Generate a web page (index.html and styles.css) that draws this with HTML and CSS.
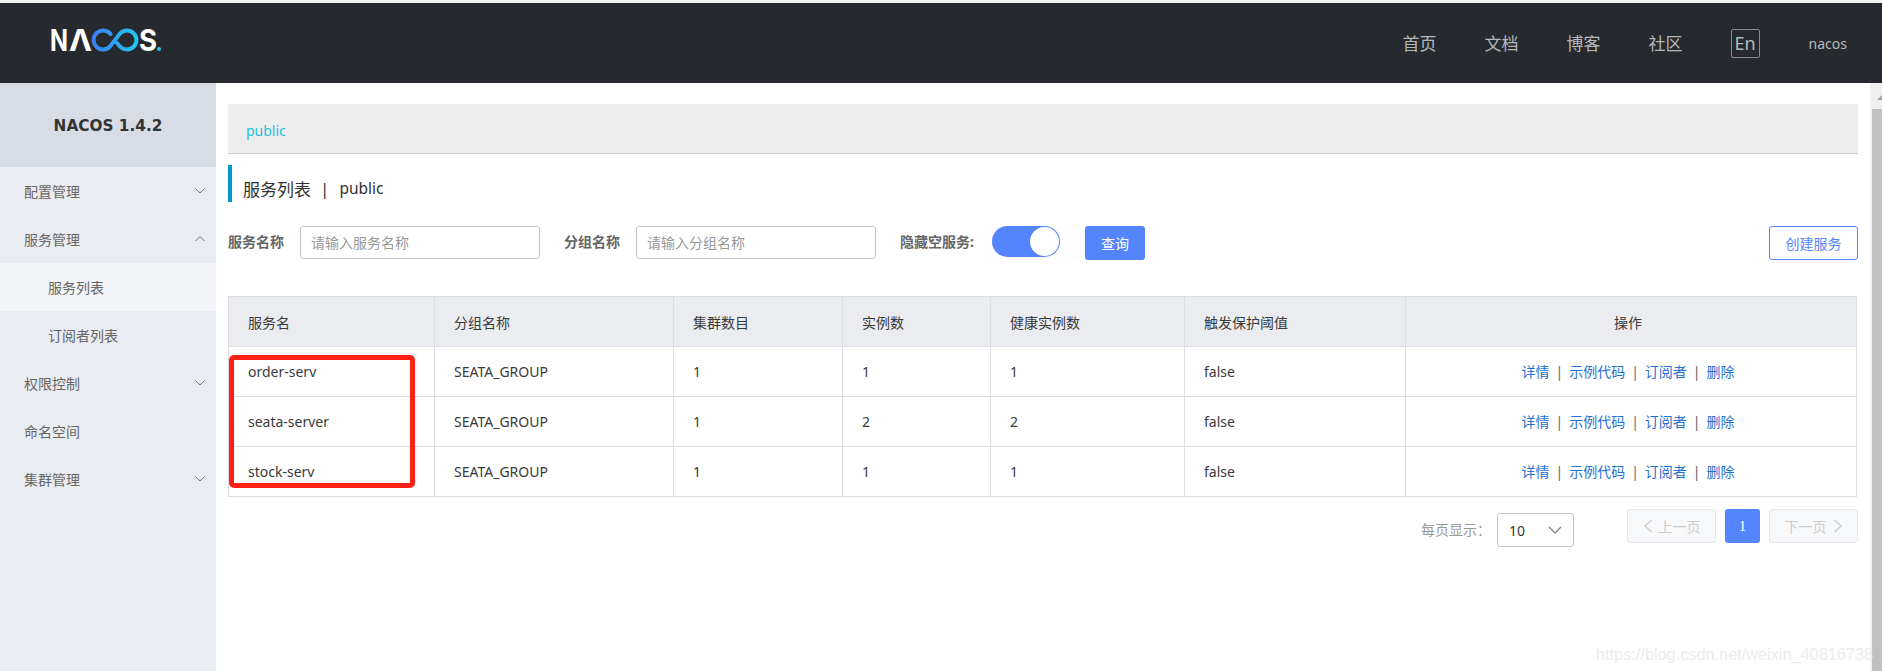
FILE: index.html
```html
<!DOCTYPE html>
<html lang="en">
<head>
  <meta charset="UTF-8" />
  <title>Nacos</title>
  <link rel="stylesheet" href="styles.css">
</head>
<body>
  <header class="topbar">
    <svg class="logo" width="112" height="28" viewBox="0 0 112 28">
      <defs>
        <linearGradient id="logoGrad" gradientUnits="userSpaceOnUse" x1="42" x2="88" y1="13" y2="13">
          <stop offset="0" stop-color="#3c7df2"/>
          <stop offset="1" stop-color="#1fc8ee"/>
        </linearGradient>
      </defs>
      <text class="logo-text" x="0" y="24" textLength="18" lengthAdjust="spacingAndGlyphs">N</text>
      <text class="logo-text" x="19" y="24" textLength="23" lengthAdjust="spacingAndGlyphs">Λ</text>
      <path d="M60.500 7A9.500 9.500 0 1 0 60 19.500L70 6.500A9.500 9.500 0 1 1 70 19.500L67 16" fill="none" stroke="url(#logoGrad)" stroke-width="4" stroke-linecap="round"/>
      <text class="logo-text" x="89" y="24" textLength="18" lengthAdjust="spacingAndGlyphs">S</text>
      <circle cx="109" cy="22" r="2" fill="#1fc8ee"/>
    </svg>
    <nav class="topnav">
      <a href="#">首页</a>
      <a href="#">文档</a>
      <a href="#">博客</a>
      <a href="#">社区</a>
      <span class="lang">En</span>
      <span class="user">nacos</span>
    </nav>
  </header>

  <div class="layout">
    <aside class="sidebar">
      <div class="brand">NACOS 1.4.2</div>
      <div class="menu-item">配置管理<svg class="chev" width="12" height="8" viewBox="0 0 12 8"><path d="M1.500 1.500L6 6l4.500-4.500"/></svg></div>
      <div class="menu-item">服务管理<svg class="chev" width="12" height="8" viewBox="0 0 12 8"><path d="M1.500 6L6 1.500 10.500 6"/></svg></div>
      <div class="menu-item sub active">服务列表</div>
      <div class="menu-item sub">订阅者列表</div>
      <div class="menu-item">权限控制<svg class="chev" width="12" height="8" viewBox="0 0 12 8"><path d="M1.500 1.500L6 6l4.500-4.500"/></svg></div>
      <div class="menu-item">命名空间</div>
      <div class="menu-item">集群管理<svg class="chev" width="12" height="8" viewBox="0 0 12 8"><path d="M1.500 1.500L6 6l4.500-4.500"/></svg></div>
    </aside>

    <main class="content">
      <div class="crumb"><a href="#">public</a></div>
      <div class="page-title">服务列表<span class="title-sep">|</span><span class="title-ns">public</span></div>

      <form class="filters">
        <label class="field-label">服务名称</label>
        <input class="text-input" placeholder="请输入服务名称">
        <label class="field-label second">分组名称</label>
        <input class="text-input" placeholder="请输入分组名称">
        <label class="field-label third">隐藏空服务:</label>
        <span class="switch"><span class="knob"></span></span>
        <button type="button" class="btn primary">查询</button>
        <button type="button" class="btn outline">创建服务</button>
      </form>

      <div class="table-wrap">
        <table class="services">
          <thead>
            <tr>
              <th class="c1">服务名</th><th class="c2">分组名称</th><th class="c3">集群数目</th><th class="c4">实例数</th><th class="c5">健康实例数</th><th class="c6">触发保护阈值</th><th class="c7">操作</th>
            </tr>
          </thead>
          <tbody>
            <tr>
              <td>order-serv</td><td>SEATA_GROUP</td><td>1</td><td>1</td><td>1</td><td>false</td>
              <td class="ops"><a href="#">详情</a><i>|</i><a href="#">示例代码</a><i>|</i><a href="#">订阅者</a><i>|</i><a href="#">删除</a></td>
            </tr>
            <tr>
              <td>seata-server</td><td>SEATA_GROUP</td><td>1</td><td>2</td><td>2</td><td>false</td>
              <td class="ops"><a href="#">详情</a><i>|</i><a href="#">示例代码</a><i>|</i><a href="#">订阅者</a><i>|</i><a href="#">删除</a></td>
            </tr>
            <tr>
              <td>stock-serv</td><td>SEATA_GROUP</td><td>1</td><td>1</td><td>1</td><td>false</td>
              <td class="ops"><a href="#">详情</a><i>|</i><a href="#">示例代码</a><i>|</i><a href="#">订阅者</a><i>|</i><a href="#">删除</a></td>
            </tr>
          </tbody>
        </table>
        <div class="red-box"></div>
      </div>

      <div class="pager">
        <span class="size-label">每页显示：</span>
        <div class="size-select">10<svg width="14" height="9" viewBox="0 0 14 9"><path d="M1 1l6 6 6-6"/></svg></div>
        <div class="pager-btns">
          <button type="button" class="page-btn off"><svg width="10" height="14" viewBox="0 0 10 14"><path d="M8.500 1L2 7l6.500 6"/></svg>上一页</button>
          <button type="button" class="page-num">1</button>
          <button type="button" class="page-btn off">下一页<svg width="10" height="14" viewBox="0 0 10 14"><path d="M1.500 1L8 7l-6.500 6"/></svg></button>
        </div>
      </div>
    </main>

    <div class="scrollbar"><span class="arrow"></span><span class="thumb"></span></div>
  </div>

  <div class="watermark">https://blog.csdn.net/weixin_40816738</div>
</body>
</html>
```

FILE: styles.css
```css
html, body {
  height: 100%;
}

body {
  margin: 0;
  padding-top: 3px;
  box-sizing: border-box;
  overflow: hidden;
  position: relative;
  background: #f0f0f0;
  font-family: "Noto Sans", "Noto Sans CJK SC", sans-serif;
  font-size: 14px;
  color: #333;
}

a {
  text-decoration: none;
}

.topbar {
  height: 80px;
  background: #262a2f;
  display: flex;
  align-items: center;
  justify-content: space-between;
  padding: 0 35px 0 50px;
}

.logo {
  display: block;
  margin-bottom: 4px;
  overflow: visible;
}

.logo-text {
  font-family: "Inter", sans-serif;
  font-size: 30px;
  font-weight: 700;
  fill: #fff;
}

.topnav {
  display: flex;
  align-items: center;
  color: #b5b8bb;
}

.topnav a {
  color: #b5b8bb;
  font-size: 17px;
  margin-right: 48px;
  padding-bottom: 2px;
}

.lang {
  width: 29px;
  height: 29px;
  box-sizing: border-box;
  border: 1px solid #8a8d90;
  border-radius: 2px;
  font-size: 18px;
  display: flex;
  align-items: center;
  justify-content: center;
  margin-right: 49px;
}

.user {
  font-size: 14px;
}

.layout {
  display: flex;
  height: calc(100% - 80px);
  background: #fff;
}

.sidebar {
  width: 216px;
  flex-shrink: 0;
  background: #e9ecf1;
}

.brand {
  height: 84px;
  background: #d8dde5;
  display: flex;
  align-items: center;
  justify-content: center;
  padding-top: 2px;
  box-sizing: border-box;
  font-family: "DejaVu Sans", "Noto Sans", sans-serif;
  font-size: 15.300px;
  font-weight: 700;
  color: #333;
}

.menu-item {
  height: 48px;
  display: flex;
  align-items: center;
  justify-content: space-between;
  padding: 0 10px 0 24px;
  color: #666;
}

.menu-item.sub {
  padding-left: 48px;
}

.menu-item.active {
  background: #f2f4f7;
}

.chev path {
  fill: none;
  stroke: #777;
  stroke-width: 1;
}

.content {
  flex: 1;
  min-width: 0;
  padding: 21px 12px 0 12px;
}

.crumb {
  height: 50px;
  box-sizing: border-box;
  background: #ededed;
  border-bottom: 1px solid #ccc;
  display: flex;
  align-items: center;
  padding: 4px 0 0 18px;
}

.crumb a {
  color: #1cc1dd;
}

.page-title {
  margin-top: 11px;
  height: 37px;
  box-sizing: border-box;
  border-left: 4px solid #09c;
  padding: 9px 0 0 11px;
  display: flex;
  align-items: center;
  font-size: 17px;
  color: #333;
}

.title-sep {
  margin: 0 10px 0 9px;
}

.title-ns {
  font-size: 15.500px;
}

.filters {
  display: flex;
  align-items: flex-start;
  margin-top: 24px;
}

.field-label {
  font-weight: 700;
  color: #666;
  width: 72px;
  line-height: 32px;
  flex-shrink: 0;
}

.field-label.second {
  margin-left: 24px;
}

.field-label.third {
  margin-left: 24px;
  width: 92px;
}

.text-input {
  width: 240px;
  height: 33px;
  box-sizing: border-box;
  border: 1px solid #c4c6cf;
  border-radius: 3px;
  padding: 0 10px;
  font: inherit;
  outline: none;
}

.text-input::placeholder {
  color: #999;
}

.switch {
  width: 68px;
  height: 31px;
  border-radius: 16px;
  background: #5584ff;
  display: flex;
  justify-content: flex-end;
  padding: 1px;
  box-sizing: border-box;
}

.knob {
  width: 29px;
  height: 29px;
  border-radius: 50%;
  background: #fff;
}

.btn {
  height: 34px;
  border-radius: 3px;
  font: inherit;
  padding: 0;
  cursor: pointer;
}

.btn.primary {
  width: 60px;
  margin-left: 25px;
  background: #5584ff;
  border: 0;
  color: #fff;
}

.btn.outline {
  width: 89px;
  margin-left: auto;
  background: #fff;
  border: 1px solid #5584ff;
  color: #5584ff;
}

.table-wrap {
  position: relative;
  margin: 36px 1px 0 0;
}

.services {
  width: 100%;
  border-collapse: collapse;
  table-layout: fixed;
}

.services th,
.services td {
  box-sizing: border-box;
  border: 1px solid #dcdee3;
  padding: 0 0 0 19px;
  height: 50px;
  text-align: left;
  font-weight: 400;
  color: #3a3a3a;
}

.services th {
  background: #ebecf0;
}

.services .c1 { width: 206px; }
.services .c2 { width: 239px; }
.services .c3 { width: 169px; }
.services .c4 { width: 148px; }
.services .c5 { width: 194px; }
.services .c6 { width: 221px; }

.services .c7,
.services .ops {
  text-align: center;
  padding: 0 6px 0 0;
}

.services .ops {
  padding-bottom: 2px;
}

.ops a {
  color: #1f72d0;
}

.ops i {
  font-style: normal;
  color: #666;
  margin: 0 6px;
}

/* annotation drawn over the first column */
.red-box {
  position: absolute;
  left: 1px;
  top: 59px;
  width: 176px;
  height: 123px;
  border: 5px solid #ff2015;
  border-radius: 5px;
}

.pager {
  display: flex;
  align-items: flex-start;
  justify-content: flex-end;
  margin-top: 12px;
}

.size-label {
  line-height: 34px;
  margin-top: 4px;
  color: #999;
  margin-right: 6px;
}

.size-select {
  width: 77px;
  height: 34px;
  box-sizing: border-box;
  margin-top: 4px;
  margin-right: 53px;
  border: 1px solid #c4c6cf;
  border-radius: 3px;
  padding: 0 11px;
  display: flex;
  align-items: center;
  justify-content: space-between;
  color: #333;
}

.size-select path {
  fill: none;
  stroke: #777;
  stroke-width: 1.200;
}

.pager-btns {
  display: flex;
  gap: 9px;
}

.page-btn {
  width: 89px;
  height: 34px;
  display: flex;
  align-items: center;
  justify-content: center;
  gap: 6px;
  padding: 0;
  border: 1px solid #e6e7eb;
  border-radius: 3px;
  background: #f7f8fa;
  color: #ccc;
  font: inherit;
}

.page-btn path {
  fill: none;
  stroke: #ccc;
  stroke-width: 1.500;
}

.page-num {
  width: 35px;
  height: 34px;
  padding: 0;
  border: 0;
  border-radius: 3px;
  background: #5584ff;
  color: #fff;
  font: inherit;
  font-family: "Liberation Serif", serif;
  font-size: 15px;
}

.scrollbar {
  width: 12px;
  flex-shrink: 0;
  background: #f0f0f0;
  display: flex;
  flex-direction: column;
  align-items: flex-end;
}

.arrow {
  height: 26px;
  width: 5px;
  box-sizing: border-box;
  padding-top: 12px;
}

.arrow::before {
  content: "";
  display: block;
  width: 0;
  height: 0;
  border-left: 5px solid transparent;
  border-bottom: 5px solid #a3a3a3;
}

.thumb {
  width: 10px;
  flex: 1;
  background: #c0c0c0;
}

/* csdn watermark pasted on the screenshot */
.watermark {
  position: absolute;
  right: 9px;
  bottom: 7px;
  font-family: "Liberation Sans", sans-serif;
  font-size: 16.300px;
  color: #ececec;
  white-space: nowrap;
}
```
